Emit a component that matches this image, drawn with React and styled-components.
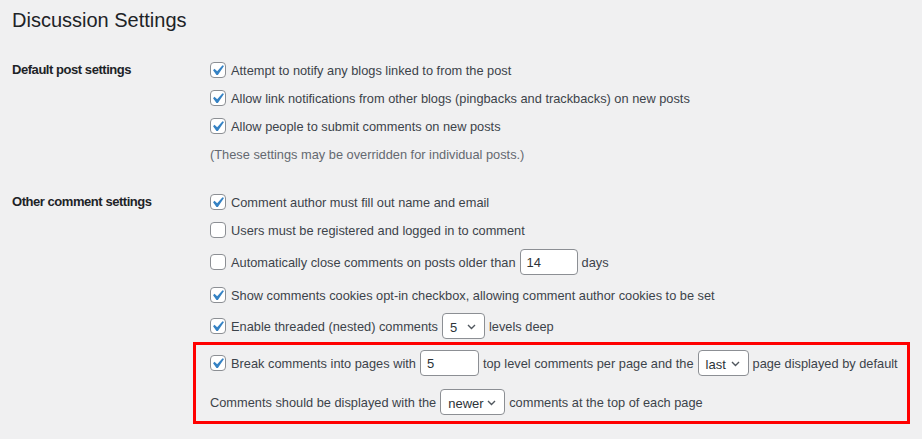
import React from 'react';
import styled, { createGlobalStyle } from 'styled-components';

const GlobalStyle = createGlobalStyle`
  body {
    margin: 0;
    background: #f0f0f1;
    font-family: "Liberation Sans", Arial, sans-serif;
    font-size: 12.8px;
    color: #3c434a;
  }
`;

const Page = styled.div`
  padding: 0 12px;
`;

const Title = styled.h1`
  margin: 0;
  padding-top: 5px;
  font-size: 20px;
  font-weight: 400;
  line-height: 30px;
  color: #1d2327;
`;

const Section = styled.div`
  display: grid;
  grid-template-columns: 198px 1fr;
  margin-top: ${(p) => p.$top}px;
`;

const Label = styled.div`
  font-size: 13px;
  font-weight: 700;
  letter-spacing: -0.45px;
  line-height: 28px;
  color: #1d2327;
`;

const Fields = styled.div`
  display: flex;
  flex-direction: column;
`;

const Row = styled.div`
  display: flex;
  align-items: center;
  gap: 4px;
  height: ${(p) => p.$h || 28}px;
  white-space: nowrap;
`;

const Note = styled.div`
  height: 30px;
  line-height: 30px;
  color: #646970;
`;

const Highlight = styled.div`
  box-sizing: border-box;
  width: 717px;
  margin-left: -17px;
  padding: 2px 0 3px 14px;
  border: 3px solid #ff0000;
  display: flex;
  flex-direction: column;
  gap: 7px;
`;

const Box = styled.span`
  position: relative;
  box-sizing: border-box;
  flex: none;
  width: 16px;
  height: 16px;
  margin-right: 1px;
  background: #fff;
  border: 1px solid #8c8f94;
  border-radius: 4px;

  svg {
    position: absolute;
    left: -4px;
    top: -3px;
  }
`;

const TextInput = styled.span`
  box-sizing: border-box;
  flex: none;
  display: inline-flex;
  align-items: center;
  width: ${(p) => p.$w}px;
  height: 26px;
  padding: 0 6px;
  background: #fff;
  border: 1px solid #8c8f94;
  border-radius: 4px;
  color: #2c3338;
  font-size: 13px;
`;

const Select = styled(TextInput)`
  justify-content: space-between;
  padding: 2px 8px 0 7px;
`;

const Check = ({ on }) => (
  <Box>
    {on && (
      <svg width="21" height="21" viewBox="0 0 20 20">
        <path d="M14.83 4.89l1.34.94-5.81 8.38H9.02L5.78 9.67l1.34-1.25 2.57 2.4z" fill="#3582c4" />
      </svg>
    )}
  </Box>
);

const Dropdown = ({ value, w }) => (
  <Select $w={w}>
    <span>{value}</span>
    <svg width="9" height="6" viewBox="0 0 9 6">
      <polyline points="1,1 4.5,4.5 8,1" fill="none" stroke="#50575e" strokeWidth="1.4" />
    </svg>
  </Select>
);

export default function App() {
  return (
    <>
      <GlobalStyle />
      <Page>
        <Title>Discussion Settings</Title>

        <Section $top={21}>
          <Label>Default post settings</Label>
          <Fields>
            <Row><Check on /><span>Attempt to notify any blogs linked to from the post</span></Row>
            <Row><Check on /><span>Allow link notifications from other blogs (pingbacks and trackbacks) on new posts</span></Row>
            <Row><Check on /><span>Allow people to submit comments on new posts</span></Row>
            <Note>(These settings may be overridden for individual posts.)</Note>
          </Fields>
        </Section>

        <Section $top={18}>
          <Label>Other comment settings</Label>
          <Fields>
            <Row><Check on /><span>Comment author must fill out name and email</span></Row>
            <Row><Check /><span>Users must be registered and logged in to comment</span></Row>
            <Row $h={36}>
              <Check />
              <span>Automatically close comments on posts older than</span>
              <TextInput $w={58}>14</TextInput>
              <span>days</span>
            </Row>
            <Row $h={30}><Check on /><span>Show comments cookies opt-in checkbox, allowing comment author cookies to be set</span></Row>
            <Row $h={32}>
              <Check on />
              <span>Enable threaded (nested) comments</span>
              <Dropdown value="5" w={43} />
              <span>levels deep</span>
            </Row>
            <Highlight>
              <Row $h={32}>
                <Check on />
                <span>Break comments into pages with</span>
                <TextInput $w={59}>5</TextInput>
                <span>top level comments per page and the</span>
                <Dropdown value="last" w={51} />
                <span>page displayed by default</span>
              </Row>
              <Row $h={32}>
                <span>Comments should be displayed with the</span>
                <Dropdown value="newer" w={65} />
                <span>comments at the top of each page</span>
              </Row>
            </Highlight>
          </Fields>
        </Section>
      </Page>
    </>
  );
}
